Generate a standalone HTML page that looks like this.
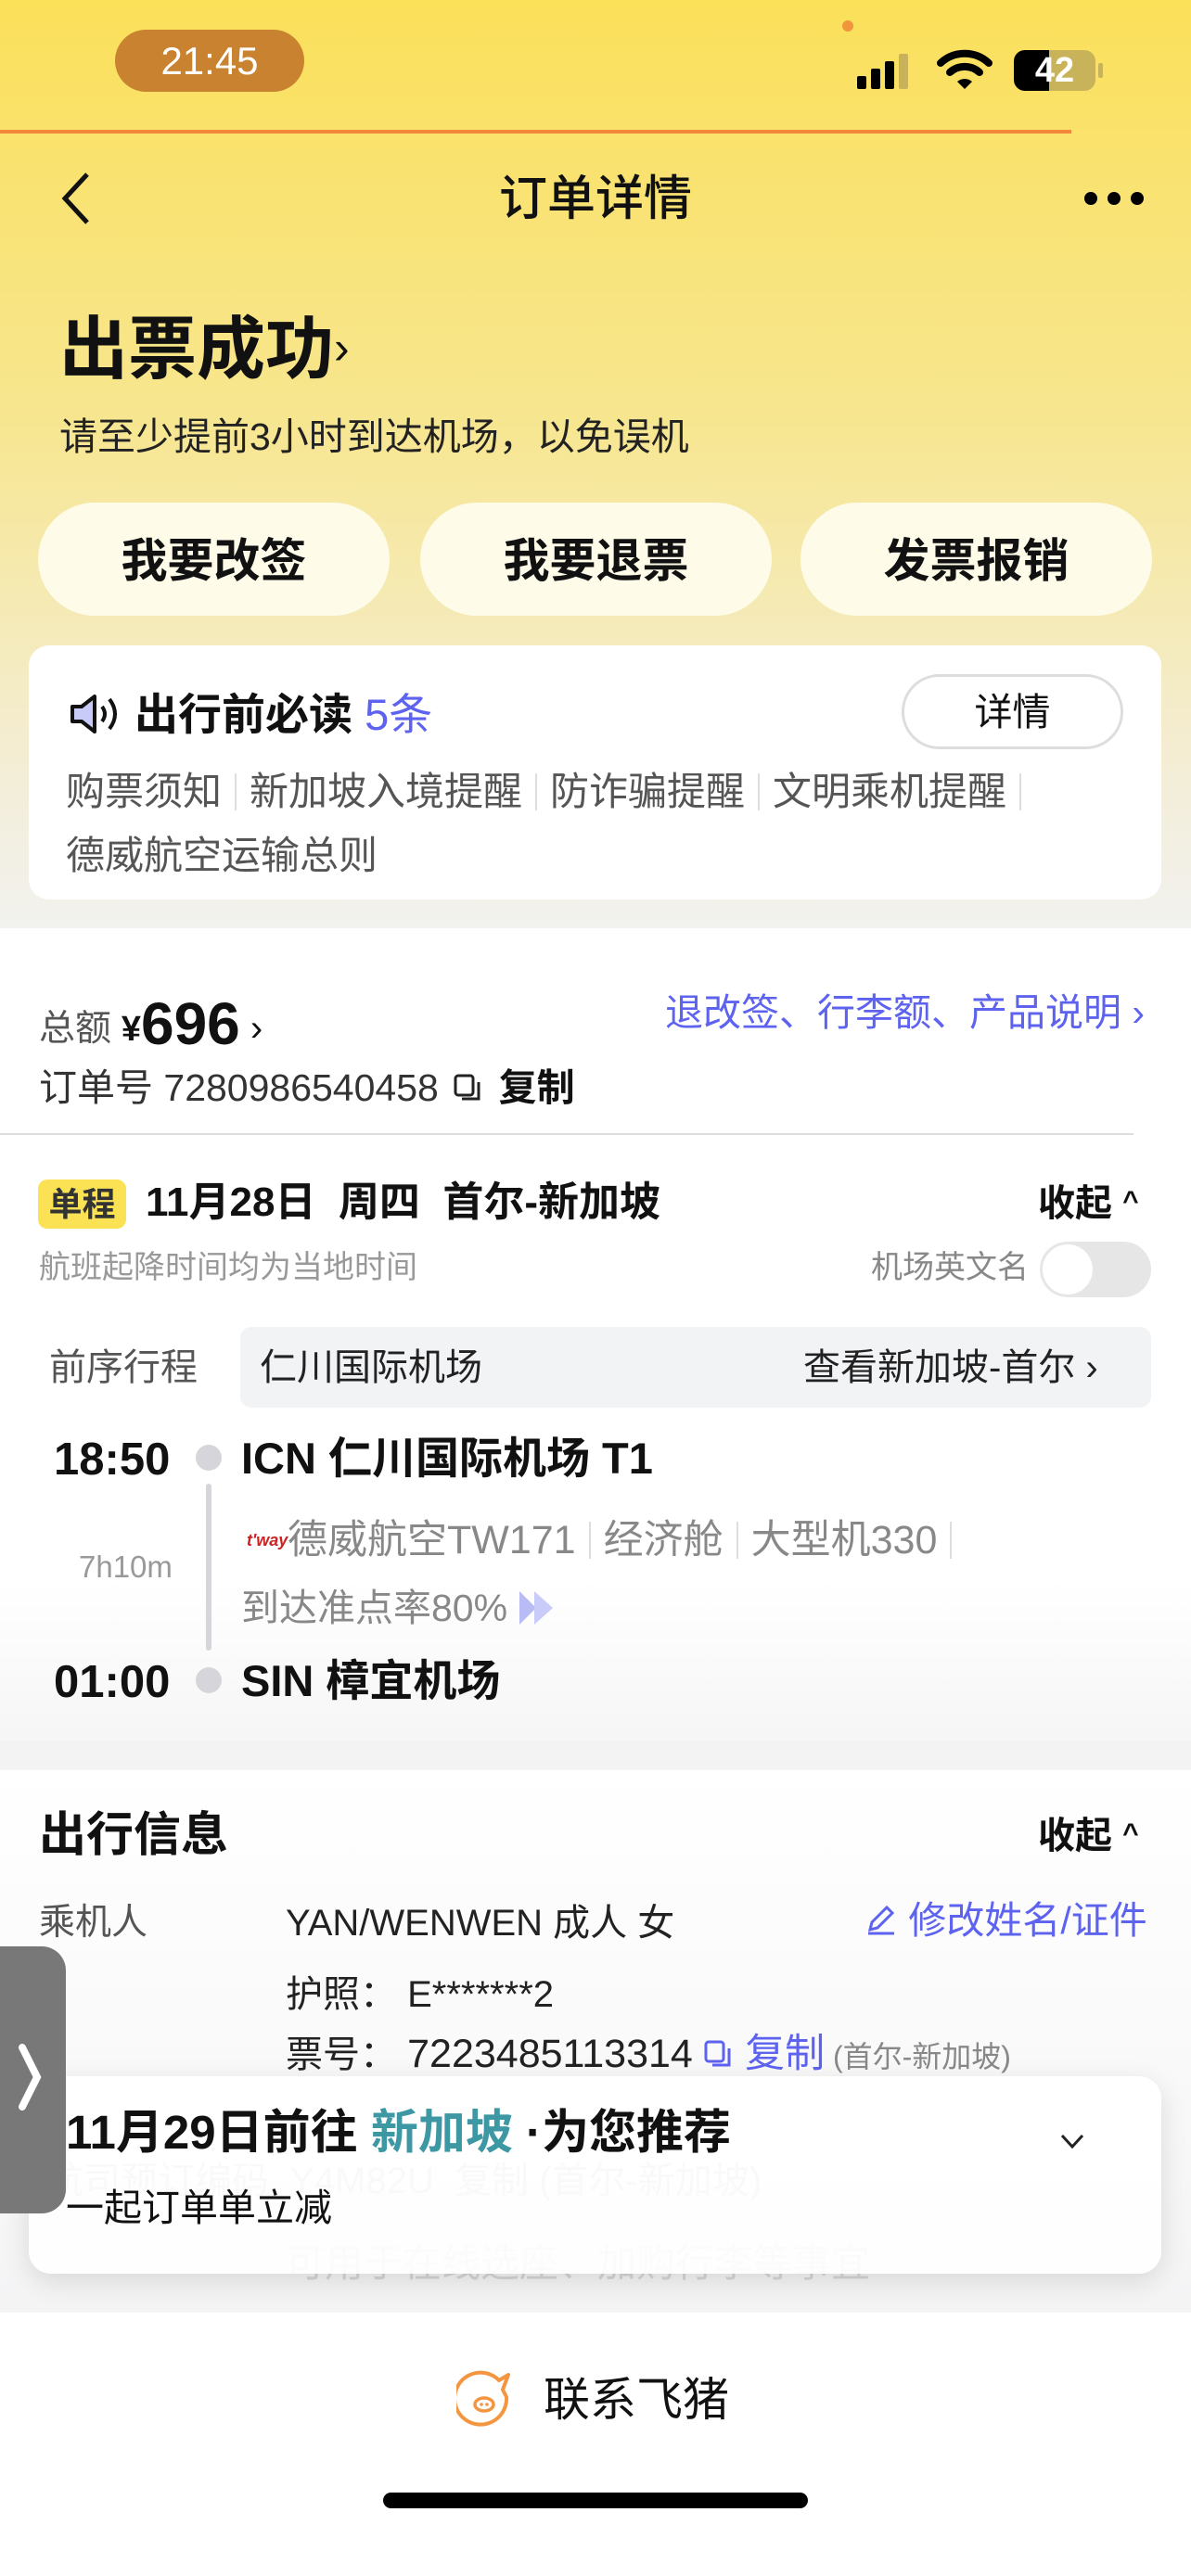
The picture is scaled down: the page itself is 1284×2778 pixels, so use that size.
<!DOCTYPE html>
<html><head><meta charset="utf-8">
<style>
*{margin:0;padding:0;box-sizing:border-box}
body{width:1284px;height:2778px;position:relative;overflow:hidden;font-family:"Liberation Sans","Noto Sans CJK SC",sans-serif;color:#111;background:#f3f3f3}
.a{position:absolute;white-space:nowrap;line-height:1}
.top{position:absolute;left:0;top:0;width:1284px;height:1010px;background:linear-gradient(#fbe05a 0%,#f7e690 45%,#f3eedb 85%,#f2f2f0 100%)}
.btn{position:absolute;top:542px;height:122px;width:379px;border-radius:61px;background:#fefbe9;font-size:50px;font-weight:bold;text-align:center;line-height:126px}
.card{position:absolute;background:#fff;border-radius:22px}
.g{color:#999}
.bl{color:#5d63ef}
.sep{display:inline-block;width:2px;height:40px;background:#ddd;margin:0 14px;vertical-align:-6px}
</style></head><body>
<div class="top"></div>
<div class="a" style="left:124px;top:32px;width:204px;height:67px;border-radius:34px;background:#c98230;color:#fff;font-size:42px;text-align:center;line-height:67px">21:45</div>
<div class="a" style="left:908px;top:22px;width:12px;height:12px;border-radius:6px;background:#f0953c"></div>
<svg class="a" style="left:922px;top:58px" width="70" height="40"><rect x="2" y="24" width="10" height="14" rx="2"/><rect x="17" y="16" width="10" height="22" rx="2"/><rect x="32" y="8" width="10" height="30" rx="2"/><rect x="47" y="0" width="10" height="38" rx="2" fill="#c9b35a"/></svg>
<svg class="a" style="left:1010px;top:52px" width="60" height="46" viewBox="0 0 60 46"><path d="M4 16 A38 38 0 0 1 56 16" stroke="#000" stroke-width="8" fill="none" stroke-linecap="round"/><path d="M14 26 A24 24 0 0 1 46 26" stroke="#000" stroke-width="8" fill="none" stroke-linecap="round"/><path d="M22 36 L30 44 L38 36 A12 12 0 0 0 22 36Z" fill="#000"/></svg>
<div class="a" style="left:1093px;top:54px;width:88px;height:44px;border-radius:12px;background:#c9b35a;overflow:hidden"><div style="width:38px;height:44px;background:#000"></div></div>
<div class="a" style="left:1093px;top:54px;width:88px;height:44px;font-size:38px;font-weight:bold;color:#fff;text-align:center;line-height:44px">42</div>
<div class="a" style="left:1184px;top:68px;width:5px;height:16px;background:#c9b35a;border-radius:2px"></div>
<div class="a" style="left:0;top:140px;width:1155px;height:4px;background:#f0873a"></div>
<svg class="a" style="left:62px;top:184px" width="40" height="60"><path d="M32 4 L8 30 L32 56" stroke="#111" stroke-width="5" fill="none"/></svg>
<div class="a" style="left:0;width:1284px;text-align:center;top:189px;font-size:52px;font-weight:500">订单详情</div>
<svg class="a" style="left:1166px;top:202px" width="70" height="24"><circle cx="10" cy="12" r="7"/><circle cx="35" cy="12" r="7"/><circle cx="60" cy="12" r="7"/></svg>
<div class="a" style="left:64px;top:340px;font-size:74px;font-weight:bold">出票成功<span style="font-size:50px;font-weight:normal;vertical-align:10px">›</span></div>
<div class="a" style="left:64px;top:451px;font-size:41px;color:#222">请至少提前3小时到达机场，以免误机</div>
<div class="btn" style="left:41px">我要改签</div>
<div class="btn" style="left:453px">我要退票</div>
<div class="btn" style="left:863px">发票报销</div>
<div class="card" style="left:31px;top:696px;width:1221px;height:274px"></div>
<svg class="a" style="left:74px;top:748px" width="58" height="44" viewBox="0 0 58 44"><path d="M4 14 H14 L28 3 V41 L14 30 H4Z" fill="#c8cbf8" stroke="#111" stroke-width="4" stroke-linejoin="round"/><path d="M36 14 Q42 22 36 30" stroke="#111" stroke-width="4" fill="none"/><path d="M44 6 Q56 22 44 38" stroke="#111" stroke-width="4" fill="none"/></svg>
<div class="a" style="left:145px;top:747px;font-size:47px;font-weight:bold">出行前必读 <span class="bl" style="font-weight:normal">5条</span></div>
<div class="a" style="left:972px;top:727px;width:239px;height:81px;border:3px solid #ddd;border-radius:41px;font-size:41px;text-align:center;line-height:77px">详情</div>
<div class="a" style="left:71px;top:833px;font-size:42px;color:#555">购票须知<span class="sep"></span>新加坡入境提醒<span class="sep"></span>防诈骗提醒<span class="sep"></span>文明乘机提醒<span class="sep"></span></div>
<div class="a" style="left:71px;top:902px;font-size:42px;color:#555">德威航空运输总则</div>
<div class="a" style="left:0;top:1001px;width:1284px;height:876px;background:linear-gradient(#fff 80%,#f6f6f6)"></div>
<div class="a" style="left:42px;top:1072px;font-size:39px;color:#555">总额 <span style="color:#111;font-weight:bold;font-size:38px">¥</span><span style="color:#111;font-weight:bold;font-size:64px;vertical-align:-4px">696</span><span style="font-size:40px;color:#111"> ›</span></div>
<div class="a bl" style="left:717px;top:1072px;font-size:41px">退改签、行李额、产品说明 ›</div>
<div class="a" style="left:42px;top:1153px;font-size:41px;color:#333">订单号 7280986540458 <svg width="34" height="34" style="vertical-align:-4px;margin:0 4px"><rect x="3" y="3" width="19" height="21" rx="3" fill="none" stroke="#222" stroke-width="3"/><path d="M10 28 H28 V10" fill="none" stroke="#222" stroke-width="3"/></svg> <span style="font-weight:bold;color:#111">复制</span></div>
<div class="a" style="left:0;top:1222px;width:1222px;height:2px;background:#ddd"></div>
<div class="a" style="left:41px;top:1272px;width:95px;height:53px;background:#fbe254;border-radius:10px;font-size:36px;font-weight:bold;text-align:center;line-height:53px;color:#333">单程</div>
<div class="a" style="left:157px;top:1275px;font-size:44px;font-weight:bold">11月28日&nbsp; 周四&nbsp; 首尔-新加坡</div>
<div class="a" style="left:1119px;top:1278px;font-size:40px;font-weight:bold">收起 <span style="font-size:30px;vertical-align:6px">^</span></div>
<div class="a g" style="left:42px;top:1350px;font-size:34px">航班起降时间均为当地时间</div>
<div class="a g" style="left:939px;top:1350px;font-size:34px;color:#888">机场英文名</div>
<div class="a" style="left:1121px;top:1339px;width:120px;height:60px;border-radius:30px;background:#e6e6e6"><div style="position:absolute;left:3px;top:3px;width:54px;height:54px;border-radius:27px;background:#fff"></div></div>
<div class="a" style="left:53px;top:1455px;font-size:40px;color:#555">前序行程</div>
<div class="a" style="left:259px;top:1431px;width:982px;height:87px;background:#f2f3f5;border-radius:12px"></div>
<div class="a" style="left:280px;top:1455px;font-size:40px;color:#222">仁川国际机场</div>
<div class="a" style="left:866px;top:1455px;font-size:40px;color:#222">查看新加坡-首尔 ›</div>
<div class="a" style="left:58px;top:1550px;font-size:49px;font-weight:bold">18:50</div>
<div class="a" style="left:211px;top:1558px;width:28px;height:28px;border-radius:14px;background:#d6d6da"></div>
<div class="a" style="left:222px;top:1600px;width:6px;height:180px;border-radius:3px;background:#d6d6da"></div>
<div class="a" style="left:260px;top:1549px;font-size:47px;font-weight:bold">ICN 仁川国际机场 T1</div>
<div class="a g" style="left:85px;top:1673px;font-size:33px">7h10m</div>
<div class="a" style="left:266px;top:1652px;font-size:18px;font-weight:bold;color:#c22;font-style:italic">t'way</div>
<div class="a" style="left:310px;top:1640px;font-size:43px;color:#888">德威航空TW171<span class="sep"></span>经济舱<span class="sep"></span>大型机330<span class="sep"></span></div>
<div class="a" style="left:260px;top:1714px;font-size:41px;color:#888">到达准点率80% <svg width="42" height="40" style="vertical-align:-6px"><path d="M2 2 L20 20 L2 38Z" fill="#b9bbf5"/><path d="M18 2 L38 20 L18 38Z" fill="#c9cbf8"/></svg></div>
<div class="a" style="left:58px;top:1790px;font-size:49px;font-weight:bold">01:00</div>
<div class="a" style="left:211px;top:1798px;width:28px;height:28px;border-radius:14px;background:#d6d6da"></div>
<div class="a" style="left:260px;top:1789px;font-size:47px;font-weight:bold">SIN 樟宜机场</div>
<div class="a" style="left:0;top:1909px;width:1284px;height:585px;background:linear-gradient(#fff,#f4f4f5)"></div>
<div class="a" style="left:42px;top:1953px;font-size:51px;font-weight:bold">出行信息</div>
<div class="a" style="left:1119px;top:1960px;font-size:40px;font-weight:bold">收起 <span style="font-size:30px;vertical-align:6px">^</span></div>
<div class="a" style="left:42px;top:2054px;font-size:39px;color:#555">乘机人</div>
<div class="a" style="left:308px;top:2054px;font-size:40px;color:#222">YAN/WENWEN 成人 女</div>
<div class="a bl" style="left:932px;top:2051px;font-size:41px"><svg width="36" height="36" style="vertical-align:-2px"><path d="M6 30 L8 22 L24 6 L30 12 L14 28Z" fill="none" stroke="#5d63ef" stroke-width="3"/><path d="M4 34 H32" stroke="#5d63ef" stroke-width="3"/></svg> 修改姓名/证件</div>
<div class="a" style="left:308px;top:2131px;font-size:40px;color:#222">护照：&nbsp;E*******2</div>
<div class="a" style="left:308px;top:2194px;font-size:40px;color:#222">票号：&nbsp;<span style="font-size:43px">7223485113314</span> <svg width="34" height="34" style="vertical-align:-4px"><rect x="3" y="3" width="19" height="21" rx="3" fill="none" stroke="#5d63ef" stroke-width="3"/><path d="M10 28 H28 V10" fill="none" stroke="#5d63ef" stroke-width="3"/></svg> <span class="bl" style="font-size:43px">复制</span><span style="font-size:32px;color:#888"> (首尔-新加坡)</span></div>
<div class="a" style="left:50px;top:2332px;font-size:40px;color:#c4c4cc">航司预订编码&nbsp; Y4M82U &nbsp;复制 (首尔-新加坡)</div>
<div class="a" style="left:308px;top:2420px;font-size:42px;color:#d6d6d6">可用于在线选座、加购行李等事宜</div>
<div class="a" style="left:31px;top:2239px;width:1221px;height:213px;border-radius:24px;background:rgba(255,255,255,0.9);box-shadow:0 8px 30px rgba(0,0,0,0.12)"></div>
<div class="a" style="left:71px;top:2274px;font-size:51px;font-weight:bold">11月29日前往 <span style="color:#3e98a4">新加坡</span> ·为您推荐</div>
<svg class="a" style="left:1142px;top:2300px" width="28" height="20"><path d="M3 3 L14 15 L25 3" stroke="#222" stroke-width="3" fill="none"/></svg>
<div class="a" style="left:71px;top:2361px;font-size:41px">一起订单单立减</div>
<div class="a" style="left:0;top:2099px;width:71px;height:288px;border-radius:0 26px 26px 0;background:#787878"></div>
<svg class="a" style="left:18px;top:2202px" width="30" height="76"><path d="M6 6 L22 38 L6 70" stroke="#fff" stroke-width="8" fill="none" stroke-linecap="round"/></svg>
<div class="a" style="left:0;top:2494px;width:1284px;height:284px;background:#fff"></div>
<svg class="a" style="left:492px;top:2555px" width="64" height="64" viewBox="0 0 64 64"><path d="M56 6 L46 12 A28 28 0 1 0 54 30 L50 22 Z" fill="none" stroke="#f49540" stroke-width="4" stroke-linejoin="round"/><ellipse cx="30" cy="38" rx="10" ry="7" fill="none" stroke="#f49540" stroke-width="3.5"/><circle cx="27" cy="38" r="1.8" fill="#f49540"/><circle cx="33" cy="38" r="1.8" fill="#f49540"/></svg>
<div class="a" style="left:586px;top:2563px;font-size:50px">联系飞猪</div>
<div class="a" style="left:413px;top:2688px;width:458px;height:17px;border-radius:9px;background:#000"></div>
</body></html>
